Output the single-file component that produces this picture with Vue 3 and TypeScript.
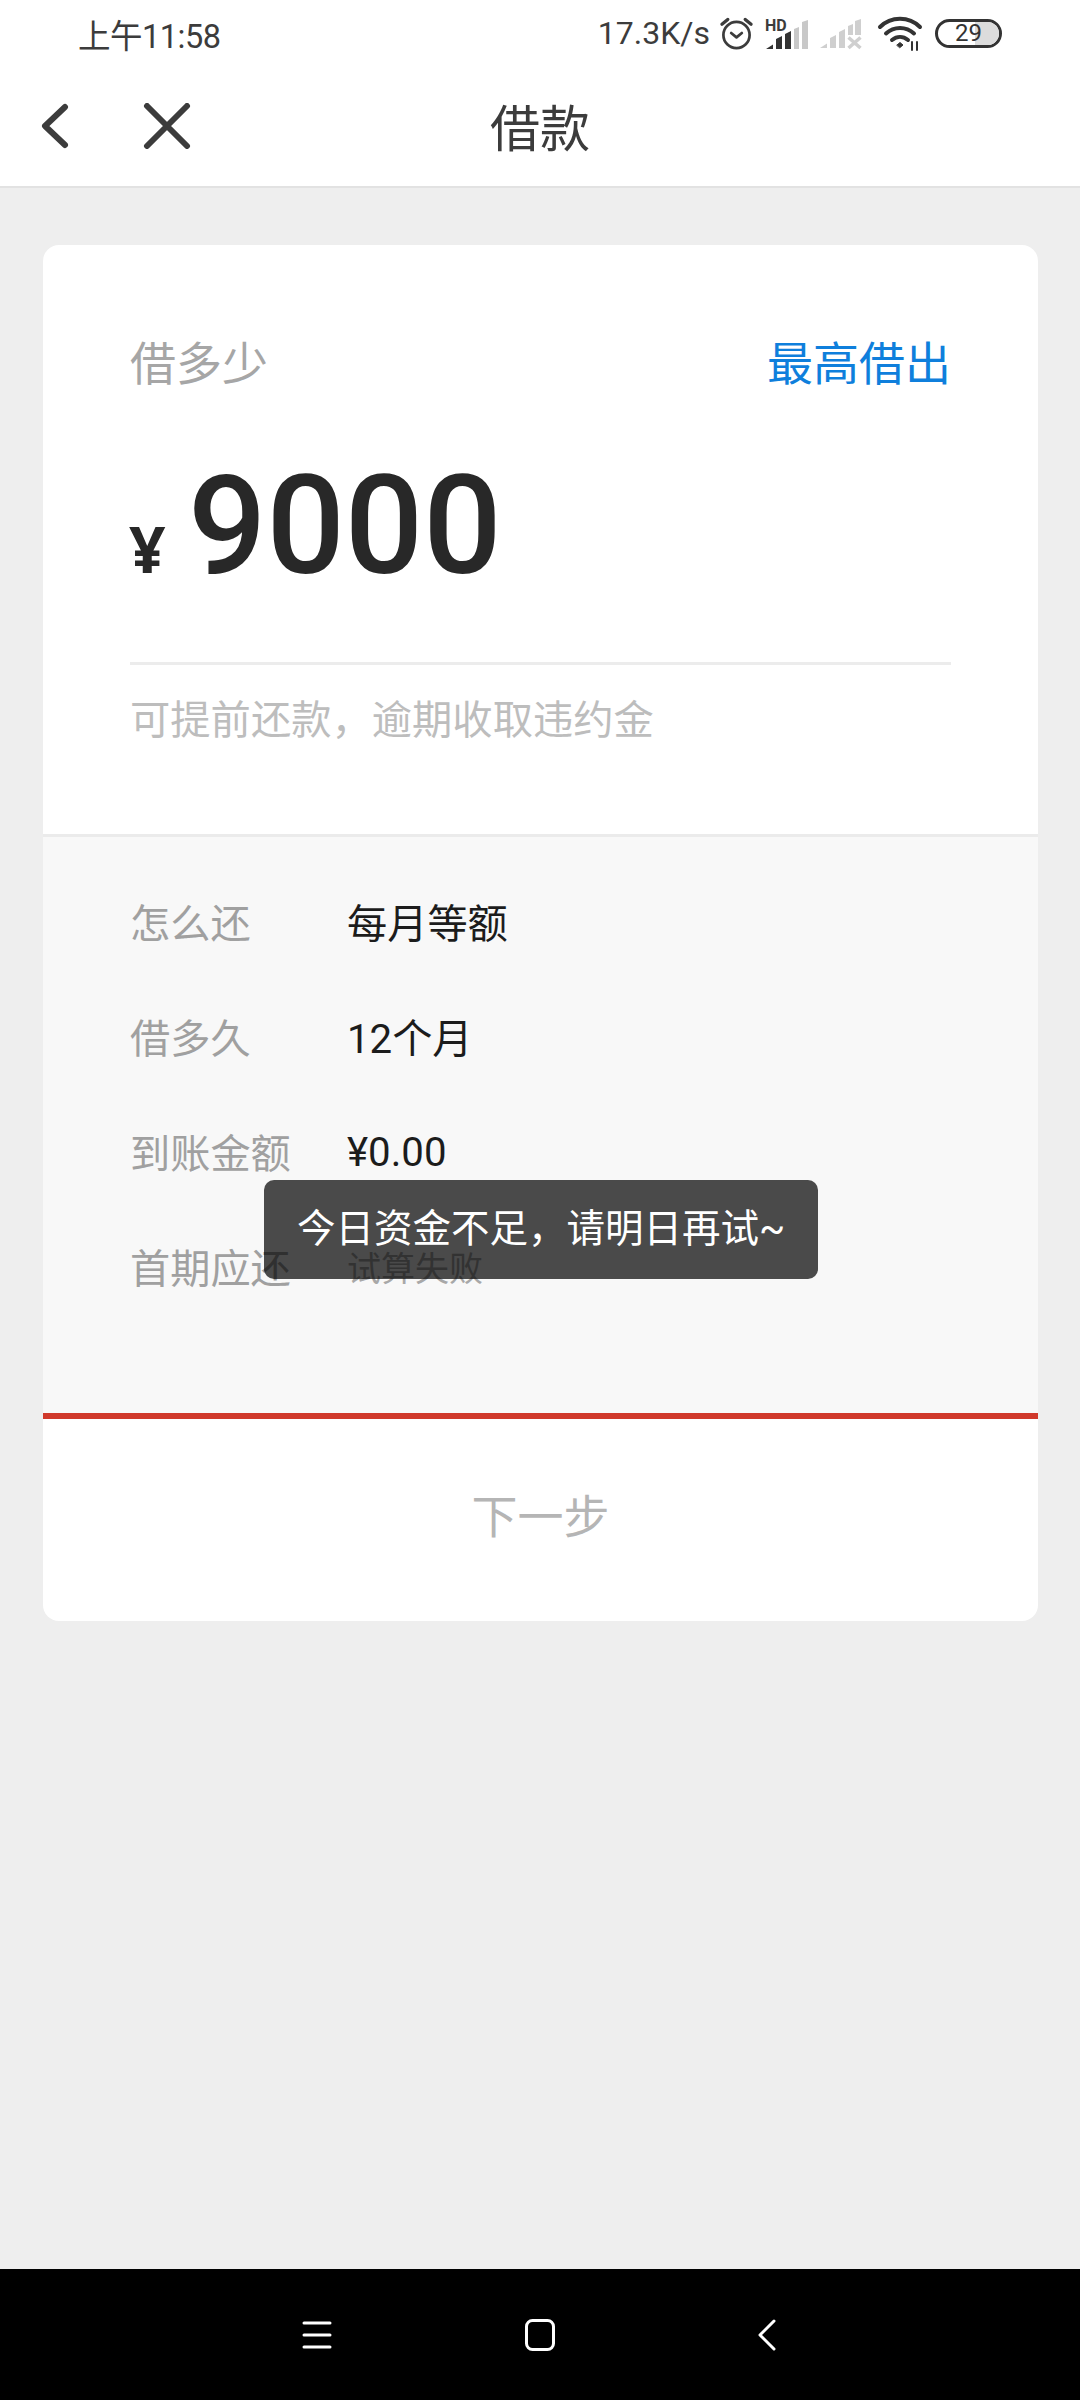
<script setup lang="ts">
const rows: { label: string; value: string; kind?: string }[] = [
  { label: '怎么还', value: '每月等额' },
  { label: '借多久', value: '12个月' },
  { label: '到账金额', value: '¥0.00', kind: 'money' },
  { label: '首期应还', value: '试算失败', kind: 'muted' },
]
</script>

<template>
  <div class="screen">
    <header class="top">
      <div class="status">
        <span class="time">上午11:58</span>
        <div class="status-right">
          <span class="speed">17.3K/s</span>
          <svg class="ic alarm" width="33" height="36" viewBox="0 0 34 36" fill="none" stroke="#3c3c3c" stroke-width="2.800" stroke-linecap="round" stroke-linejoin="round">
            <circle cx="17" cy="20" r="13.500" />
            <path d="M11.500 18l5.500 4.500 5.500-4.500" />
            <path d="M2 9l6-5M32 9l-6-5" stroke-width="3.400" />
          </svg>
          <svg class="ic hd" width="43" height="34" viewBox="0 0 43 34">
            <text x="0" y="15" font-size="16" font-weight="700" fill="#3c3c3c" font-family="Roboto, sans-serif">HD</text>
            <path d="M1 33l7-4.500V33z M11 33V23l6-3v13z M20 33V18l6-3v18z" fill="#333" />
            <path d="M29 33V13l5-2v22z M37 33V6l6-2v29z" fill="#c8c8c8" />
          </svg>
          <svg class="ic sig" width="42" height="32" viewBox="0 0 42 32">
            <path d="M0 31l7-4.500V31z M10 31V21l6-3v13z M19 31V15l6-3v19z M28 18V9l5-2v11z M35 18V4l6-2v16z" fill="#cfcfcf" />
            <path d="M28.500 20.500l12 10.500M40.500 20.500l-12 10.500" stroke="#cfcfcf" stroke-width="3.500" />
          </svg>
          <svg class="ic wifi" width="44" height="34" viewBox="0 0 44 34" fill="none" stroke="#333" stroke-linecap="round">
            <path d="M2 11C13 0 31 0 42 11" stroke-width="4" />
            <path d="M8 17.500C16 10 28 10 36 17.500" stroke-width="4" />
            <path d="M14 24C19 20 25 20 30 24" stroke-width="4" />
            <path d="M19 29l3-2.500 3 2.500-3 2.500z" fill="#333" stroke-width="1" />
            <path d="M34 26v8M39 26v8" stroke-width="2" />
          </svg>
          <div class="battery"><i class="battery-rest"></i><span>29</span></div>
        </div>
      </div>
      <nav class="nav">
        <button class="nav-btn back" type="button" aria-label="返回">
          <svg width="30" height="46" viewBox="0 0 30 46" fill="none" stroke="#3c3c3c" stroke-width="6" stroke-linecap="round" stroke-linejoin="round">
            <path d="M25 4L5 23l20 19" />
          </svg>
        </button>
        <button class="nav-btn close" type="button" aria-label="关闭">
          <svg width="48" height="46" viewBox="0 0 48 46" fill="none" stroke="#3c3c3c" stroke-width="6" stroke-linecap="round">
            <path d="M4 3l40 40M44 3L4 43" />
          </svg>
        </button>
        <h1 class="title">借款</h1>
      </nav>
    </header>

    <main class="content">
      <section class="card">
        <div class="amount-block">
          <div class="amount-head">
            <span class="ask">借多少</span>
            <a class="max">最高借出</a>
          </div>
          <div class="amount">
            <span class="yen">¥</span>
            <span class="digits">9000</span>
          </div>
          <p class="hint">可提前还款，逾期收取违约金</p>
        </div>
        <div class="details">
          <div v-for="r in rows" :key="r.label" class="row">
            <span class="label">{{ r.label }}</span>
            <span class="value" :class="r.kind">{{ r.value }}</span>
          </div>
        </div>
        <div class="next">下一步</div>
      </section>
    </main>

    <footer class="sysnav">
      <svg width="30" height="28" viewBox="0 0 30 28" stroke="#fff" stroke-width="3" stroke-linecap="round">
        <path d="M2 2h26M2 14h26M2 26h26" />
      </svg>
      <svg width="30" height="32" viewBox="0 0 30 32" fill="none" stroke="#fff" stroke-width="3">
        <rect x="1.500" y="1.500" width="27" height="29" rx="6" />
      </svg>
      <svg width="18" height="32" viewBox="0 0 18 32" fill="none" stroke="#fff" stroke-width="3" stroke-linecap="round" stroke-linejoin="round">
        <path d="M16 2L2 16l14 14" />
      </svg>
    </footer>

    <div class="toast">今日资金不足，请明日再试~</div>
  </div>
</template>

<style>
html, body { margin: 0; padding: 0; }
</style>

<style scoped>
.screen {
  position: relative;
  width: 1080px;
  height: 2400px;
  display: flex;
  flex-direction: column;
  background: #eeeeee;
  font-family: Roboto, "Noto Sans CJK SC", sans-serif;
  overflow: hidden;
}
.top {
  background: #fff;
  border-bottom: 2px solid #e2e2e2;
  height: 188px;
  box-sizing: border-box;
  flex: none;
}
.status {
  height: 66px;
  padding: 0 78px;
  display: flex;
  align-items: center;
  justify-content: space-between;
  color: #3c3c3c;
}
.time { font-size: 32.500px; letter-spacing: -0.500px; }
.status-right { display: flex; align-items: center; gap: 12px; }
.speed { font-size: 32px; }
.ic { display: block; overflow: visible; }
.alarm { margin-left: -2px; }
.wifi { margin-left: 4px; }
.battery {
  position: relative;
  width: 61px;
  height: 23px;
  margin-left: 1px;
  border: 3px solid #333;
  border-radius: 15px;
  display: flex;
  align-items: center;
  justify-content: center;
  font-size: 24px;
  color: #333;
  overflow: hidden;
}
.battery span { position: relative; }
.battery-rest {
  position: absolute;
  right: 0;
  top: 0;
  bottom: 0;
  width: 24px;
  background: #dcdcdc;
}
.nav {
  position: relative;
  height: 120px;
  display: flex;
  align-items: center;
  padding-left: 40px;
}
.nav-btn {
  padding: 0;
  background: none;
  border: 0;
  display: flex;
}
.close { margin-left: 73px; }
.title {
  position: absolute;
  left: 0;
  right: 0;
  margin: 0;
  padding-bottom: 3px;
  text-align: center;
  font-size: 50px;
  font-weight: 400;
  color: #3c3c3c;
}
.content { flex: 1; padding: 57px 42px 0 43px; }
.card {
  background: #fff;
  border-radius: 16px;
  overflow: hidden;
}
.amount-block {
  height: 592px;
  box-sizing: border-box;
  padding: 85px 87px 0;
  border-bottom: 3px solid #ebebeb;
}
.amount-head {
  display: flex;
  justify-content: space-between;
  align-items: center;
  height: 60px;
  font-size: 46px;
}
.ask { color: #a6a6a6; }
.max { color: #0f7fdc; }
.amount {
  display: flex;
  align-items: baseline;
  height: 218px;
  margin-top: 54px;
  border-bottom: 3px solid #ececec;
  color: #282828;
  line-height: 165px;
}
.yen { font-size: 64px; font-weight: 700; font-family: "Noto Sans", sans-serif; width: 59px; margin-left: -1px; }
.digits { font-size: 138px; font-weight: 500; }
.hint { margin: 28px 0 0; font-size: 40.300px; color: #bdbdbd; line-height: 56px; }
.details {
  background: #f8f8f8;
  height: 576px;
  box-sizing: border-box;
  padding: 26px 87px 0;
}
.row {
  display: flex;
  align-items: center;
  height: 115px;
  font-size: 40.200px;
}
.label { width: 217px; color: #a0a0a0; flex: none; }
.value { color: #1c1c1c; }
.value.money { padding-top: 4px; }
.value.muted { color: #a8a8a8; font-size: 34px; padding-top: 2px; }
.next {
  height: 208px;
  box-sizing: border-box;
  border-top: 6px solid #d0392b;
  padding-bottom: 14px;
  display: flex;
  align-items: center;
  justify-content: center;
  font-size: 46px;
  color: #b5b5b5;
}
.sysnav {
  flex: none;
  height: 131px;
  background: #000;
  display: grid;
  grid-template-columns: 30px 30px 18px;
  justify-content: start;
  padding-left: 302px;
  column-gap: 193px;
  align-items: center;
}
.sysnav svg:last-child { margin-left: 10px; }
.toast {
  position: absolute;
  left: 264px;
  top: 1180px;
  width: 554px;
  height: 99px;
  box-sizing: border-box;
  padding-bottom: 9px;
  display: flex;
  align-items: center;
  justify-content: center;
  border-radius: 10px;
  background: rgba(0, 0, 0, 0.7);
  color: #fff;
  font-size: 38.500px;
}
</style>
